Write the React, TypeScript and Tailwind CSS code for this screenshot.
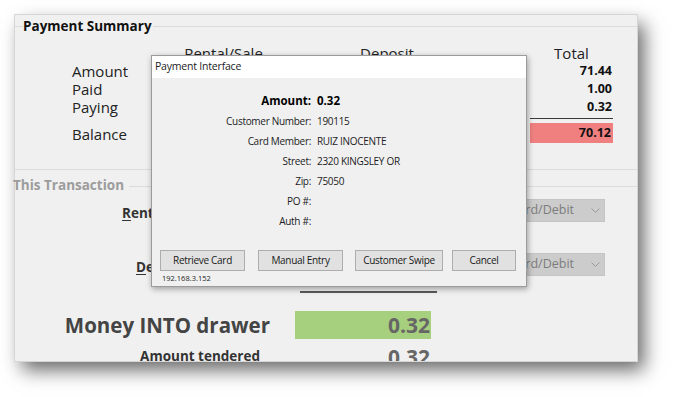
import React from 'react';

const cols = 'grid grid-cols-[110px_83px_80px_84px_101px_83px] pl-[57px]';

const Chevron = () => (
  <svg width="9" height="6" viewBox="0 0 9 6" fill="none" stroke="#9a9a9a" strokeWidth={1}>
    <polyline points="0.5,0.5 4.5,4.5 8.5,0.5" />
  </svg>
);

const Dropdown = () => (
  <div className="ml-auto mr-[32px] w-[140px] h-[23px] bg-[#cccccc] border border-[#c4c4c4] flex items-center justify-between pl-[6px] pr-[4px]">
    <span className="text-[12.5px] text-[#7c7c7c] whitespace-nowrap">Credit Card/Debit</span>
    <Chevron />
  </div>
);

const InfoRow = ({ label, value }: { label: string; value?: string }) => (
  <>
    <span className="h-[20px] flex items-center justify-end whitespace-nowrap">{label}</span>
    <span className="h-[20px] flex items-center whitespace-nowrap">{value}</span>
  </>
);

const DialogButton = ({ children, className }: { children: React.ReactNode; className: string }) => (
  <button className={`h-[21px] bg-[#e1e1e1] border border-[#adadad] text-[10px] tracking-[-0.3px] text-[#1a1a1a] flex items-center justify-center ${className}`}>
    {children}
  </button>
);

export default function App() {
  return (
    <div className="w-[673px] h-[397px] bg-white pl-[15px] pt-[15px] font-['Open_Sans',sans-serif] text-[#222]">
      <div className="relative w-[622px] h-[346px] overflow-y-clip bg-[#f0f0f0] ring-1 ring-[#d6d6d6] shadow-[7px_9px_18px_rgba(0,0,0,0.6)]">
        {/* Payment Summary group */}
        <div className="flex items-center h-[23px]">
          <div className="w-[8px] h-px bg-[#dcdcdc]" />
          <span className="text-[13.5px] font-bold text-[#111] leading-none whitespace-nowrap">Payment Summary</span>
          <div className="flex-1 h-px bg-[#dcdcdc] ml-[1px]" />
        </div>

        <div className="mt-[6px] text-[15px] leading-none">
          <div className={`${cols} h-[18px] items-center`}>
            <span />
            <span className="flex justify-center whitespace-nowrap">Rental/Sale</span>
            <span />
            <span className="flex justify-center">Deposit</span>
            <span />
            <span className="flex justify-center">Total</span>
          </div>
          {[
            ['Amount', '71.44'],
            ['Paid', '1.00'],
            ['Paying', '0.32'],
          ].map(([label, value]) => (
            <div key={label} className={`${cols} h-[18px] items-center`}>
              <span>{label}</span>
              <span />
              <span />
              <span />
              <span />
              <span className="text-right font-bold text-[12.5px] text-[#111] pr-[1px]">{value}</span>
            </div>
          ))}
          <div className={`${cols} h-[7px]`}>
            <div className="col-start-6 mt-[2px] h-px bg-[#3a3a3a]" />
          </div>
          <div className={`${cols} h-[20px] items-center`}>
            <span className="pt-[2px]">Balance</span>
            <span />
            <span />
            <span />
            <span />
            <span className="h-[20px] bg-[#f08080] flex items-center justify-end pr-[2px] font-bold text-[12.5px] text-[#111]">70.12</span>
          </div>
        </div>

        <div className="mt-[26px] h-px bg-[#dcdcdc]" />

        {/* This Transaction group */}
        <div className="flex items-center h-[29px] pt-[3px]">
          <span className="ml-[-2px] text-[13.5px] font-bold text-[#9c9c9c] leading-none whitespace-nowrap">This Transaction</span>
          <div className="flex-1 h-px bg-[#dcdcdc] ml-[5px]" />
        </div>

        <div className="flex h-[23px]">
          <span className="pl-[107px] pt-[5px] leading-[18px] text-[13.5px] font-bold text-[#333] whitespace-nowrap">
            <span className="underline underline-offset-2">R</span>ental/Sale:
          </span>
          <Dropdown />
        </div>
        <div className="flex h-[23px] mt-[31px]">
          <span className="pl-[121px] pt-[5px] leading-[18px] text-[13.5px] font-bold text-[#333] whitespace-nowrap">
            <span className="underline underline-offset-2">D</span>eposit:
          </span>
          <Dropdown />
        </div>

        <div className="ml-[285px] w-[137px] h-[2px] mt-[15px] bg-[#5a5a5a]" />

        <div className="flex items-center mt-[18px] h-[28px]">
          <span className="w-[255px] text-right text-[20.5px] font-bold text-[#444] leading-none whitespace-nowrap">Money INTO drawer</span>
          <div className="ml-[25px] w-[136px] h-[28px] bg-[#a6d07e] flex items-center justify-end pr-[1px] text-[21px] font-bold text-[#666] leading-none">
            0.32
          </div>
        </div>
        <div className="flex items-center mt-[4px] h-[28px]">
          <span className="w-[245px] text-right text-[13.5px] font-bold text-[#333] leading-none whitespace-nowrap">Amount tendered</span>
          <div className="ml-[35px] w-[136px] text-right pr-[1px] text-[21px] font-bold text-[#666] leading-none">0.32</div>
        </div>

        {/* Payment Interface dialog */}
        <div className="absolute left-[136px] top-[40px] w-[376px] h-[232px] bg-[#f0f0f0] border border-[#9b9b9b] shadow-[1px_2px_6px_rgba(0,0,0,0.35)] text-[#1c1c24]">
          <div className="h-[22px] bg-white flex items-center pl-[3px] text-[10.5px] tracking-[-0.2px]">Payment Interface</div>
          <div className="grid grid-cols-[159px_1fr] gap-x-[6px] pt-[13px] text-[10px] tracking-[-0.3px]">
            <span className="h-[20px] flex items-center justify-end font-bold text-[11.5px] tracking-normal text-black">Amount:</span>
            <span className="h-[20px] flex items-center font-bold text-[11.5px] tracking-normal text-black">0.32</span>
            <InfoRow label="Customer Number:" value="190115" />
            <InfoRow label="Card Member:" value="RUIZ INOCENTE" />
            <InfoRow label="Street:" value="2320 KINGSLEY OR" />
            <InfoRow label="Zip:" value="75050" />
            <InfoRow label="PO #:" />
            <InfoRow label="Auth #:" />
          </div>
          <div className="flex mt-[19px] pl-[8px]">
            <DialogButton className="w-[85px]">Retrieve Card</DialogButton>
            <DialogButton className="w-[85px] ml-[13px]">Manual Entry</DialogButton>
            <DialogButton className="w-[88px] ml-[12px]">Customer Swipe</DialogButton>
            <DialogButton className="w-[64px] ml-[9px]">Cancel</DialogButton>
          </div>
          <div className="h-[15px] flex items-center pl-[10px] text-[7.5px] text-[#222]">192.168.3.152</div>
        </div>
      </div>
    </div>
  );
}
